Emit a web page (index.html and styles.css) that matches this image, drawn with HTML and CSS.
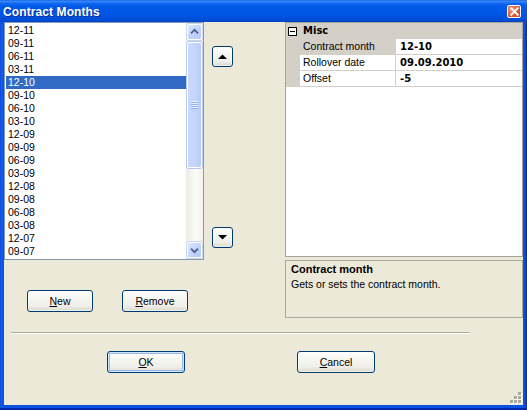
FILE: index.html
```html
<!DOCTYPE html>
<html>
<head>
<meta charset="utf-8">
<title>Contract Months</title>
<link rel="stylesheet" href="styles.css">
</head>
<body>
<div class="window">
  <div class="titlebar">
    <span class="title">Contract Months</span>
    <span class="close"><svg width="9" height="9" viewBox="0 0 9 9"><path d="M1.2 1.2L7.8 7.8M7.8 1.2L1.2 7.8" stroke="#fff" stroke-width="1.9" stroke-linecap="square"/></svg></span>
  </div>
  <div class="frame">
    <div class="client">
      <div class="top">
        <div class="left">
          <div class="list-row">
            <div class="listbox">
              <ul class="items">
                <li>12-11</li>
                <li>09-11</li>
                <li>06-11</li>
                <li>03-11</li>
                <li class="sel">12-10</li>
                <li>09-10</li>
                <li>06-10</li>
                <li>03-10</li>
                <li>12-09</li>
                <li>09-09</li>
                <li>06-09</li>
                <li>03-09</li>
                <li>12-08</li>
                <li>09-08</li>
                <li>06-08</li>
                <li>03-08</li>
                <li>12-07</li>
                <li>09-07</li>
              </ul>
              <div class="vscroll">
                <div class="sb-btn"><svg width="15" height="16" viewBox="0 0 15 16"><path d="M3.5 9.5L7.5 5.5L11.5 9.5" fill="none" stroke="#4d6185" stroke-width="2"/></svg></div>
                <div class="sb-track">
                  <div class="sb-thumb"><span class="grip-lines"></span></div>
                </div>
                <div class="sb-btn"><svg width="15" height="16" viewBox="0 0 15 16"><path d="M3.5 6.5L7.5 10.5L11.5 6.5" fill="none" stroke="#4d6185" stroke-width="2"/></svg></div>
              </div>
            </div>
            <div class="arrows">
              <button class="btn arrow"><svg width="9" height="5" viewBox="0 0 9 5"><path d="M0 5L4.5 0.5L9 5Z" fill="#000"/></svg></button>
              <button class="btn arrow"><svg width="9" height="5" viewBox="0 0 9 5"><path d="M0 0L4.5 4.5L9 0Z" fill="#000"/></svg></button>
            </div>
          </div>
          <div class="edit-buttons">
            <button class="btn small"><u>N</u>ew</button>
            <button class="btn small"><u>R</u>emove</button>
          </div>
        </div>
        <div class="right">
          <div class="propgrid">
            <div class="pg-row cat">
              <span class="pg-margin"><span class="minus"></span></span>
              <span class="pg-cat">Misc</span>
            </div>
            <div class="pg-row">
              <span class="pg-margin"></span>
              <span class="pg-label sel">Contract month</span>
              <span class="pg-value">12-10</span>
            </div>
            <div class="pg-row">
              <span class="pg-margin"></span>
              <span class="pg-label">Rollover date</span>
              <span class="pg-value">09.09.2010</span>
            </div>
            <div class="pg-row">
              <span class="pg-margin"></span>
              <span class="pg-label">Offset</span>
              <span class="pg-value">-5</span>
            </div>
          </div>
          <div class="desc">
            <div class="desc-title">Contract month</div>
            <div class="desc-text">Gets or sets the contract month.</div>
          </div>
        </div>
      </div>
      <div class="separator"></div>
      <div class="dialog-buttons">
        <button class="btn wide default"><u>O</u>K</button>
        <button class="btn wide"><u>C</u>ancel</button>
      </div>
      <div class="size-grip">
        <span class="dot" style="grid-area:1/3"></span>
        <span class="dot" style="grid-area:2/2"></span>
        <span class="dot" style="grid-area:2/3"></span>
        <span class="dot" style="grid-area:3/1"></span>
        <span class="dot" style="grid-area:3/2"></span>
        <span class="dot" style="grid-area:3/3"></span>
      </div>
    </div>
  </div>
</div>
</body>
</html>
```
FILE: styles.css
```css
* { box-sizing: border-box; }
html, body { margin: 0; padding: 0; }
body {
  width: 527px;
  height: 410px;
  overflow: hidden;
  background: #0846dc;
  font-family: "Liberation Sans", Arial, sans-serif;
  font-size: 10.5px;
  color: #000;
}
.window {
  width: 527px;
  height: 410px;
  display: flex;
  flex-direction: column;
  background: #0a4ee2;
}
.titlebar {
  height: 22px;
  flex: none;
  display: flex;
  align-items: center;
  padding: 0 6px 0 3px;
  color: #fff;
  background: linear-gradient(to bottom, #0a58e0 0px, #3d8ef8 1px, #2a7cf6 2px, #0a62ee 4px, #0058ea 7px, #0056e6 14px, #0050dc 18px, #0049cf 21px, #0042c0 22px);
}
.title {
  flex: 1;
  font-weight: bold;
  font-size: 12px;
  letter-spacing: 0.1px;
  text-shadow: 1px 1px 0 #0a2a9c;
  padding-top: 1px;
}
.close {
  width: 14px;
  height: 13px;
  border: 1px solid #fff;
  border-radius: 2px;
  display: flex;
  align-items: center;
  justify-content: center;
  background: radial-gradient(circle at 30% 30%, #f0a488 0%, #e0623c 45%, #c8421a 100%);
}
.frame {
  flex: 1;
  display: flex;
  padding: 0 4px 5px 4px;
  background: linear-gradient(to right, #0a3ed0 0px, #1660ee 1px, #0a52e4 3px, #0a52e4 calc(100% - 3px), #0a40d0 calc(100% - 1px), #00209a 100%);
  box-shadow: inset 0 -2px 0 #002aa8;
}
.client {
  position: relative;
  flex: 1;
  background: #ece9d8;
  display: flex;
  flex-direction: column;
}
.top {
  display: flex;
  height: 296px;
}
.left {
  width: 229px;
  display: flex;
  flex-direction: column;
}
.list-row {
  display: flex;
  height: 238px;
}
.listbox {
  width: 200px;
  height: 238px;
  border: 1px solid #7f9db9;
  background: #fff;
  display: flex;
}
.items {
  flex: 1;
  margin: 0;
  padding: 1px 0 0 1px;
  list-style: none;
  overflow: hidden;
}
.items li {
  height: 13px;
  line-height: 13px;
  padding-left: 2px;
  white-space: nowrap;
}
.items li.sel {
  background: #316ac5;
  color: #fff;
}
.vscroll {
  width: 17px;
  display: flex;
  flex-direction: column;
  background: linear-gradient(to right, #eeede5, #fbfbf8 60%, #f3f1ec);
}
.sb-btn {
  flex: none;
  height: 16px;
  margin: 1px;
  border: 1px solid #fff;
  border-radius: 2px;
  background: linear-gradient(135deg, #dde8fe 0%, #c4d5fb 50%, #b3c8f5 100%);
  box-shadow: 0 0 0 1px #c9d6f0;
  display: flex;
  align-items: center;
  justify-content: center;
}
.sb-btn svg { display: block; }
.sb-track {
  flex: 1;
  display: flex;
  flex-direction: column;
}
.sb-thumb {
  height: 126px;
  margin: 1px 1px 0 1px;
  border: 1px solid #fff;
  border-radius: 2px;
  background: linear-gradient(to right, #c9d8fc 0%, #c6d5fb 50%, #b8cbf6 100%);
  box-shadow: 0 0 0 1px #b7caf2;
  display: flex;
  align-items: center;
  justify-content: center;
}
.grip-lines {
  width: 7px;
  height: 8px;
  background: repeating-linear-gradient(to bottom, #eef3fe 0px, #eef3fe 1px, #8cb0f8 1px, #8cb0f8 2px);
}
.arrows {
  margin-left: 8px;
  width: 21px;
  display: flex;
  flex-direction: column;
  justify-content: space-between;
  padding: 24px 0 12px;
}
.btn {
  font-family: "Liberation Sans", Arial, sans-serif;
  font-size: 10.5px;
  color: #000;
  padding: 0;
  border: 1px solid #003c74;
  border-radius: 3px;
  background: linear-gradient(to bottom, #ffffff 0%, #f6f6f2 35%, #efeee8 75%, #e2e0d6 92%, #d6d2c4 100%);
  box-shadow: inset 0 0 0 1px rgba(255,255,255,0.6);
  display: flex;
  align-items: center;
  justify-content: center;
}
.btn u { text-decoration: underline; text-underline-offset: 1px; }
.arrow {
  width: 21px;
  height: 21px;
}
.arrow svg { display: block; }
.edit-buttons {
  display: flex;
  gap: 29px;
  margin-top: 30px;
  padding-left: 23px;
}
.small {
  width: 66px;
  height: 22px;
}
.right {
  margin-left: 52px;
  width: 238px;
  display: flex;
  flex-direction: column;
}
.propgrid {
  height: 235px;
  border: 1px solid #a5a39b;
  background: #fff;
}
.pg-row {
  display: flex;
  height: 16px;
}
.pg-margin {
  width: 14px;
  flex: none;
  background: #d4d0c8;
  display: flex;
  align-items: center;
  padding-left: 2px;
}
.minus {
  width: 9px;
  height: 9px;
  border: 1px solid #000;
  background: #fff;
  position: relative;
}
.minus::after {
  content: "";
  position: absolute;
  left: 1px;
  top: 3px;
  width: 5px;
  height: 1px;
  background: #000;
}
.pg-row.cat { background: #d4d0c8; }
.pg-cat {
  padding-left: 3px;
  font-family: "DejaVu Sans", sans-serif;
  font-weight: bold;
  font-size: 10px;
  line-height: 16px;
}
.pg-label {
  width: 96px;
  flex: none;
  padding-left: 3px;
  line-height: 15px;
  border-right: 1px solid #d4d0c8;
  border-bottom: 1px solid #d4d0c8;
  white-space: nowrap;
  overflow: hidden;
}
.pg-label.sel { background: #d4d0c8; }
.pg-value {
  flex: 1;
  padding-left: 4px;
  line-height: 15px;
  border-bottom: 1px solid #d4d0c8;
  font-family: "DejaVu Sans", sans-serif;
  font-weight: bold;
  font-size: 10px;
}
.desc {
  margin-top: 3px;
  height: 58px;
  border: 1px solid #aca899;
  padding: 2px 5px;
  background: #ece9d8;
}
.desc-title {
  font-weight: bold;
  font-size: 11px;
  line-height: 13px;
}
.desc-text {
  margin-top: 2px;
  line-height: 13px;
}
.separator {
  margin-top: 14px;
  margin-left: 7px;
  width: 459px;
  height: 2px;
  border-top: 1px solid #aca899;
  border-bottom: 1px solid #fff;
}
.dialog-buttons {
  display: flex;
  gap: 112px;
  margin-top: 17px;
  padding-left: 103px;
}
.wide {
  width: 78px;
  height: 22px;
}
.default {
  box-shadow: inset 0 0 0 1px #cee7ff, inset 0 0 0 2px #98b8ea;
}
.size-grip {
  position: absolute;
  right: 1px;
  bottom: 1px;
  display: grid;
  grid-template-columns: repeat(3, 4px);
  grid-template-rows: repeat(3, 4px);
}
.dot {
  width: 3px;
  height: 3px;
  background: #aca899;
  box-shadow: 1px 1px 0 #fff;
}
```
